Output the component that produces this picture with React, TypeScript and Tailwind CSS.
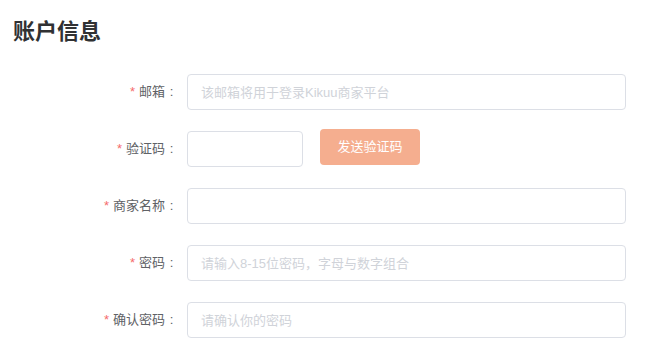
const font = "font-['Microsoft_YaHei','Liberation_Sans','Noto_Sans_CJK_SC',sans-serif]";

type Row = { label: string; placeholder?: string; code?: boolean };

const rows: Row[] = [
  { label: '邮箱', placeholder: '该邮箱将用于登录Kikuu商家平台' },
  { label: '验证码', code: true },
  { label: '商家名称' },
  { label: '密码', placeholder: '请输入8-15位密码，字母与数字组合' },
  { label: '确认密码', placeholder: '请确认你的密码' },
];

const inputCls =
  'h-[36px] rounded-[4px] border border-[#dcdfe6] bg-white px-[13px] text-[13px] text-[#606266] outline-none placeholder:text-[#d0d3d9]';

const App = () => {
  return (
    <div className={`min-h-[362px] w-[646px] bg-white ${font}`}>
      <div className="pl-[13px] pt-[17px]">
        <h2 className="text-[22px] leading-[30px] font-bold text-[#303133]">账户信息</h2>
      </div>

      <form className="mt-[27px] flex flex-col gap-[21px]">
        {rows.map((r) => (
          <div key={r.label} className="flex items-center">
            <label className="w-[187px] shrink-0 pr-[9px] text-right text-[13px] leading-[36px] text-[#606266]">
              <span className="mr-[4px] text-[#f56c6c]">*</span>
              {r.label}
              <span className="inline-block w-[13px] text-center">:</span>
            </label>
            {r.code ? (
              <div className="flex items-center gap-[17px]">
                <input className={`${inputCls} w-[116px]`} />
                <button
                  type="button"
                  className="-mt-[4px] h-[36px] w-[100px] rounded-[4px] bg-[#f5ae8f] text-[13px] text-white"
                >
                  发送验证码
                </button>
              </div>
            ) : (
              <input className={`${inputCls} w-[439px]`} placeholder={r.placeholder} />
            )}
          </div>
        ))}
      </form>
    </div>
  );
};

export default App;
